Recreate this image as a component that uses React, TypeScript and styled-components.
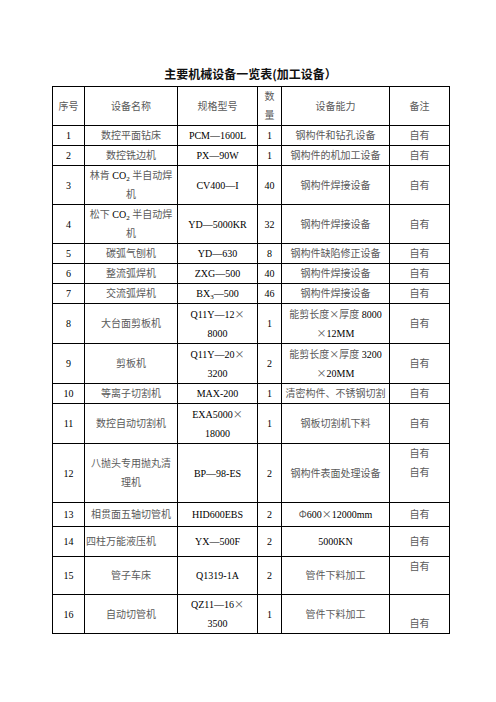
import React from 'react';
import styled, { createGlobalStyle } from 'styled-components';

const GlobalStyle = createGlobalStyle`
  html, body {
    margin: 0;
    padding: 0;
    background: #fff;
  }
  body {
    font-family: 'Liberation Serif', 'Noto Sans CJK SC', serif;
    color: #000;
  }
`;

const Page = styled.div`
  padding: 66px 0 40px 52px;
`;

const Title = styled.h1`
  width: 397px;
  margin: 0 0 4px;
  font-family: 'Noto Sans CJK SC', sans-serif;
  font-size: 12px;
  line-height: 16px;
  font-weight: 700;
  text-align: center;
  color: #111;
`;

const Table = styled.table`
  width: 397px;
  border-collapse: collapse;
  table-layout: fixed;
`;

const Row = styled.tr<{ $h: number }>`
  height: ${(p) => p.$h}px;
`;

const Cell = styled.td<{ $align?: 'left' | 'center'; $v?: 'top' | 'middle' | 'bottom' }>`
  border: 1px solid #000;
  padding: 0 1px;
  text-align: ${(p) => p.$align ?? 'center'};
  vertical-align: ${(p) => p.$v ?? 'middle'};
  font-size: 10px;
  line-height: 19px;
  white-space: nowrap;
  overflow: hidden;
`;

const Han = styled.span`
  font-family: 'Noto Sans CJK SC', sans-serif;
  line-height: 1;
  color: #5a5a5a;
`;

const Sub = styled.sub`
  font-size: 7px;
  line-height: 0;
  vertical-align: -2px;
`;

// CJK text is drawn lighter than the Latin runs, as in the scanned table
const HAN = /([\u00d7\u03a6\u3000-\u303f\u4e00-\u9fff\uff00-\uffef]+)/;

const renderLine = (line: string) =>
  line.split(/(_\d)/).map((part, i) => {
    if (/^_\d$/.test(part)) return <Sub key={i}>{part[1]}</Sub>;
    return part
      .split(HAN)
      .map((seg, j) => (j % 2 ? <Han key={`${i}-${j}`}>{seg}</Han> : seg));
  });

const renderText = (s: string) =>
  s.split('\n').map((line, i) => (
    <React.Fragment key={i}>
      {i > 0 && <br />}
      {renderLine(line)}
    </React.Fragment>
  ));

interface Equipment {
  h: number;
  no: string;
  name: string;
  spec: string;
  qty: string;
  cap: string;
  note: string;
  nameAlign?: 'left';
  noteV?: 'top' | 'bottom';
}

const header: Equipment = {
  h: 39,
  no: '序号',
  name: '设备名称',
  spec: '规格型号',
  qty: '数\n量',
  cap: '设备能力',
  note: '备注',
};

const rows: Equipment[] = [
  { h: 19, no: '1', name: '数控平面钻床', spec: 'PCM—1600L', qty: '1', cap: '钢构件和钻孔设备', note: '自有' },
  { h: 20, no: '2', name: '数控铣边机', spec: 'PX—90W', qty: '1', cap: '钢构件的机加工设备', note: '自有' },
  { h: 39, no: '3', name: '林肯 CO_2 半自动焊\n机', spec: 'CV400—I', qty: '40', cap: '钢构件焊接设备', note: '自有' },
  { h: 39, no: '4', name: '松下 CO_2 半自动焊\n机', spec: 'YD—5000KR', qty: '32', cap: '钢构件焊接设备', note: '自有' },
  { h: 19, no: '5', name: '碳弧气刨机', spec: 'YD—630', qty: '8', cap: '钢构件缺陷修正设备', note: '自有' },
  { h: 20, no: '6', name: '整流弧焊机', spec: 'ZXG—500', qty: '40', cap: '钢构件焊接设备', note: '自有' },
  { h: 20, no: '7', name: '交流弧焊机', spec: 'BX_3—500', qty: '46', cap: '钢构件焊接设备', note: '自有' },
  { h: 40, no: '8', name: '大台面剪板机', spec: 'Q11Y—12×\n8000', qty: '1', cap: '能剪长度×厚度 8000\n×12MM', note: '自有' },
  { h: 40, no: '9', name: '剪板机', spec: 'Q11Y—20×\n3200', qty: '2', cap: '能剪长度×厚度 3200\n×20MM', note: '自有' },
  { h: 19, no: '10', name: '等离子切割机', spec: 'MAX-200', qty: '1', cap: '清密构件、不锈钢切割', note: '自有' },
  { h: 40, no: '11', name: '数控自动切割机', spec: 'EXA5000×\n18000', qty: '1', cap: '钢板切割机下料', note: '自有' },
  { h: 59, no: '12', name: '八抛头专用抛丸清\n理机', spec: 'BP—98-ES', qty: '2', cap: '钢构件表面处理设备', note: '自有\n自有', noteV: 'top' },
  { h: 24, no: '13', name: '相贯面五轴切管机', spec: 'HID600EBS', qty: '2', cap: 'Φ600×12000mm', note: '自有' },
  { h: 30, no: '14', name: '四柱万能液压机', spec: 'YX—500F', qty: '2', cap: '5000KN', note: '自有', nameAlign: 'left' },
  { h: 38, no: '15', name: '管子车床', spec: 'Q1319-1A', qty: '2', cap: '管件下料加工', note: '自有', noteV: 'top' },
  { h: 39, no: '16', name: '自动切管机', spec: 'QZ11—16×\n3500', qty: '1', cap: '管件下料加工', note: '自有', noteV: 'bottom' },
];

const colWidths = [32, 93, 80, 24, 108, 60];

const EquipmentRow: React.FC<{ item: Equipment }> = ({ item }) => (
  <Row $h={item.h}>
    <Cell>{renderText(item.no)}</Cell>
    <Cell $align={item.nameAlign}>{renderText(item.name)}</Cell>
    <Cell>{renderText(item.spec)}</Cell>
    <Cell>{renderText(item.qty)}</Cell>
    <Cell>{renderText(item.cap)}</Cell>
    <Cell $v={item.noteV}>{renderText(item.note)}</Cell>
  </Row>
);

const App: React.FC = () => (
  <>
    <GlobalStyle />
    <Page>
      <Title>主要机械设备一览表(加工设备）</Title>
      <Table>
        <colgroup>
          {colWidths.map((w, i) => (
            <col key={i} style={{ width: w }} />
          ))}
        </colgroup>
        <tbody>
          <EquipmentRow item={header} />
          {rows.map((r) => (
            <EquipmentRow key={r.no} item={r} />
          ))}
        </tbody>
      </Table>
    </Page>
  </>
);

export default App;
